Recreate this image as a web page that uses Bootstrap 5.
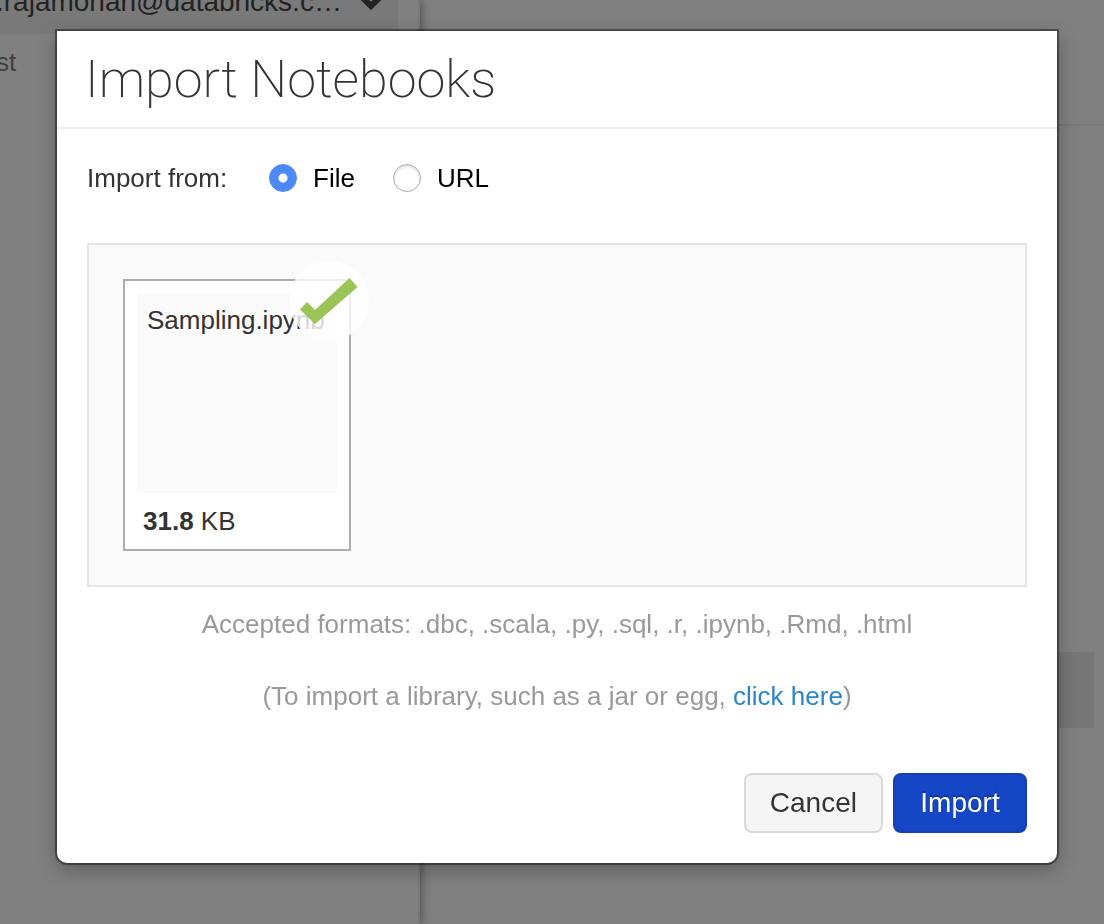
<!DOCTYPE html>
<html lang="en">
<head>
<meta charset="utf-8">
<meta name="viewport" content="width=device-width, initial-scale=1">
<title>Import Notebooks</title>
<link rel="stylesheet" href="https://cdn.jsdelivr.net/npm/bootstrap@5.3.0/dist/css/bootstrap.min.css">
<style>
  body { font-family: "Liberation Sans", Arial, sans-serif; font-size: 26px; line-height: 36px; color: #333; background: #808080; }
  .workspace { height: 100vh; }
  .browser-pane { width: 420px; border-right: 2px solid #777; box-shadow: 2px 0 8px rgba(0,0,0,.35); }
  .pane-head { width: 398px; height: 34px; background: #797979; color: #222; font-size: 28px; }
  .pane-head span { margin: -16px 0 0 -4px; }
  .pane-item { color: #404040; margin-left: -4px; padding-top: 10px; }
  .detail-head { height: 126px; border-bottom: 2px solid #787878; }
  .detail-row { height: 76px; margin: 526px 10px 0 0; background: #767676; }

  .modal { padding: 31px 47px 0 57px; }
  .modal-dialog { max-width: none; margin: 0; }
  .modal-content { border: 0; border-radius: 0 0 10px 10px; color: #333; box-shadow: 0 0 0 2px rgba(0,0,0,.4), 0 6px 20px rgba(0,0,0,.3); }
  .modal-header { padding: 19px 28px 17px; border-bottom: 2px solid #eee; border-radius: 0; }
  .modal-title { font-family: Roboto, "Liberation Sans", sans-serif; font-weight: 200; font-size: 52px; line-height: 60px; }
  .modal-body { padding: 31px 30px 0; }
  .modal-footer { padding: 59px 30px 30px; gap: 10px; border: 0; }
  .modal-footer > * { margin: 0; }

  .source-label { width: 182px; }
  .source-option { color: #000; gap: 16px; margin-right: 38px; }
  .source-option input { appearance: none; width: 28px; height: 28px; margin: 0; border: 1px solid #aaa; border-radius: 50%; background: #fff; box-shadow: inset 0 2px 3px rgba(0,0,0,.12); }
  .source-option input:checked { border-color: #4d88f7; background: radial-gradient(circle, #fff 4px, #4d88f7 5px); box-shadow: none; }

  .drop-area { margin-top: 47px; padding: 34px; border: 2px solid #e5e5e5; background: #fafafa; }
  .file-tile { width: 228px; border: 2px solid #acacac; background: #fff; padding: 12px 12px 0; }
  .file-name { height: 200px; padding: 9px 10px; background: #fafafa; }
  .file-size { padding: 10px 6px; }
  .file-done { right: -20px; top: -20px; }
  .hint { color: #999; padding-top: 19px; }
  .hint p { margin: 0 0 36px; }
  .hint a { color: #2a85c9; }

  .btn { font-size: 28px; line-height: 40px; padding: 8px 24px; border-width: 2px; border-radius: 8px; min-width: 134px; }
  .btn-cancel, .btn-cancel:hover { background: #f5f5f5; border-color: #d9d9d9; color: #333; }
  .btn-import, .btn-import:hover { background: #1546c6; border-color: #133fb2; color: #fff; text-shadow: 0 -2px 0 rgba(0,0,0,.25); }
</style>
</head>
<body class="overflow-hidden">
<div class="workspace d-flex">
  <aside class="browser-pane flex-shrink-0 overflow-hidden">
    <div class="pane-head d-flex align-items-start justify-content-between">
      <span>.rajamohan@databricks.c…</span>
      <svg width="40" height="34" viewBox="0 0 40 34" fill="none" stroke="#222" stroke-width="6" aria-hidden="true"><path d="M2 -5 13 6 24 -5"/></svg>
    </div>
    <div class="pane-item">st</div>
  </aside>
  <main class="flex-grow-1">
    <div class="detail-head"></div>
    <div class="detail-row"></div>
  </main>
</div>

<div class="modal d-block" role="dialog" aria-modal="true" aria-labelledby="dialogTitle">
  <div class="modal-dialog">
    <form class="modal-content">
      <div class="modal-header">
        <h1 class="modal-title" id="dialogTitle">Import Notebooks</h1>
      </div>
      <div class="modal-body">
        <div class="d-flex align-items-center" role="radiogroup" aria-labelledby="sourceLabel">
          <span class="source-label" id="sourceLabel">Import from:</span>
          <label class="source-option d-flex align-items-center" for="fromFile"><input type="radio" name="source" id="fromFile" checked>File</label>
          <label class="source-option d-flex align-items-center" for="fromUrl"><input type="radio" name="source" id="fromUrl">URL</label>
        </div>
        <div class="drop-area">
          <div class="file-tile position-relative">
            <div class="file-name">Sampling.ipynb</div>
            <div class="file-size"><strong>31.8</strong> KB</div>
            <svg class="file-done position-absolute" width="80" height="80" viewBox="0 0 80 80" role="img" aria-label="Uploaded">
              <circle cx="40" cy="40" r="40" fill="#fff" fill-opacity=".8"/>
              <path d="M11 48.5 18 41 26 49 60.500 17 68.500 26 26 63Z" fill="#9ac455"/>
            </svg>
          </div>
        </div>
        <div class="hint text-center">
          <p>Accepted formats: .dbc, .scala, .py, .sql, .r, .ipynb, .Rmd, .html</p>
          <p class="mb-0">(To import a library, such as a jar or egg, <a class="text-decoration-none" href="#">click here</a>)</p>
        </div>
      </div>
      <div class="modal-footer">
        <button type="button" class="btn btn-cancel">Cancel</button>
        <button type="submit" class="btn btn-import">Import</button>
      </div>
    </form>
  </div>
</div>
<script src="https://cdn.jsdelivr.net/npm/bootstrap@5.3.0/dist/js/bootstrap.bundle.min.js"></script>
</body>
</html>
